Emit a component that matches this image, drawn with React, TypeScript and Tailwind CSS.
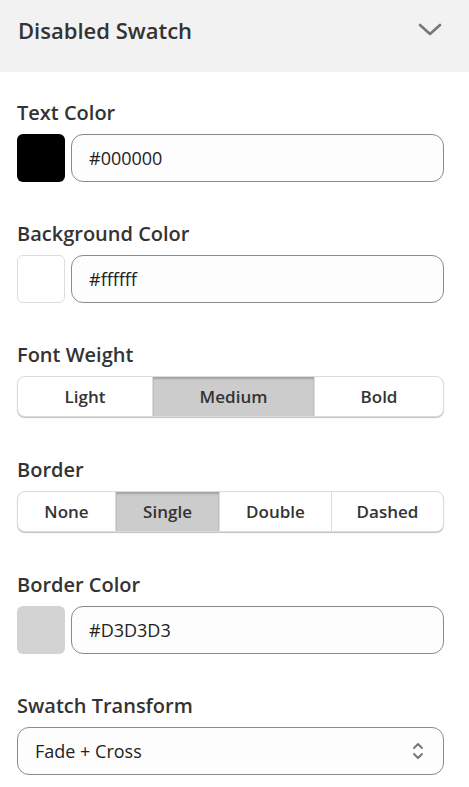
import React, { useState } from 'react'

const font = { fontFamily: '"Segoe UI", "Open Sans", sans-serif' }

function Label({ children }: { children: React.ReactNode }) {
  return <div className="text-[20px] leading-[26px] font-semibold text-[#333] mb-[8px]">{children}</div>
}

function ColorRow({ swatch, value, bordered }: { swatch: string; value: string; bordered?: boolean }) {
  return (
    <div className="flex gap-[6px] h-[48px]">
      <div
        className={`w-[48px] h-[48px] rounded-[6px] ${bordered ? 'border border-[#ddd]' : ''}`}
        style={{ backgroundColor: swatch }}
      />
      <div className="flex-1 flex items-center h-[48px] rounded-[12px] border border-[#8a8a8a] bg-[#fdfdfd] pl-[17px] text-[18px] text-[#222]">
        {value}
      </div>
    </div>
  )
}

function Segmented({ options, active, widths }: { options: string[]; active: string; widths: string[] }) {
  const [sel, setSel] = useState(active)
  return (
    <div className="flex h-[41px] mb-[1px] rounded-[8px] border border-[#dcdcdc] shadow-[0_1px_1px_rgba(0,0,0,0.25)] overflow-hidden bg-white">
      {options.map((o, i) => (
        <button
          key={o}
          onClick={() => setSel(o)}
          className={`${widths[i]} flex items-center justify-center text-[17px] font-semibold text-[#333] ${i > 0 ? 'border-l border-[#dcdcdc]' : ''} ${sel === o ? 'bg-[#cccccc] shadow-[inset_0_2px_2px_rgba(0,0,0,0.2)]' : ''}`}
        >
          {o}
        </button>
      ))}
    </div>
  )
}

export default function App() {
  const [open, setOpen] = useState(true)
  return (
    <div className="w-[469px] min-h-[787px] bg-white" style={font}>
      <div
        className="h-[72px] bg-[#f2f2f2] flex items-start justify-between pl-[18px] pr-[27px] pt-[14px] cursor-pointer"
        onClick={() => setOpen(!open)}
      >
        <span className="text-[22px] leading-[32px] font-semibold text-[#333]">Disabled Swatch</span>
        <svg width="24" height="16" viewBox="0 0 24 16" className="mt-[8px]" fill="none" stroke="#777" strokeWidth="2.6" strokeLinecap="round" strokeLinejoin="round">
          <path d="M2 3l10 9 10-9" />
        </svg>
      </div>

      <div className="px-[17px] pr-[25px] pt-[28px] flex flex-col gap-[39px]">
        <div>
          <Label>Text Color</Label>
          <ColorRow swatch="#000000" value="#000000" />
        </div>
        <div>
          <Label>Background Color</Label>
          <ColorRow swatch="#ffffff" value="#ffffff" bordered />
        </div>
        <div>
          <Label>Font Weight</Label>
          <Segmented options={['Light', 'Medium', 'Bold']} active="Medium" widths={['w-[134px]', 'w-[162px]', 'flex-1']} />
        </div>
        <div>
          <Label>Border</Label>
          <Segmented
            options={['None', 'Single', 'Double', 'Dashed']}
            active="Single"
            widths={['w-[97px]', 'w-[104px]', 'w-[112px]', 'flex-1']}
          />
        </div>
        <div>
          <Label>Border Color</Label>
          <ColorRow swatch="#D3D3D3" value="#D3D3D3" />
        </div>
        <div>
          <Label>Swatch Transform</Label>
          <div className="flex items-center justify-between h-[48px] rounded-[12px] border border-[#8a8a8a] bg-[#fdfdfd] pl-[17px] pr-[18px] text-[18px] text-[#222]">
            <span>Fade + Cross</span>
            <svg width="14" height="22" viewBox="0 0 14 22" fill="none" stroke="#777" strokeWidth="2" strokeLinecap="round" strokeLinejoin="round">
              <path d="M3 8l4-4 4 4" />
              <path d="M3 14l4 4 4-4" />
            </svg>
          </div>
        </div>
      </div>
    </div>
  )
}
